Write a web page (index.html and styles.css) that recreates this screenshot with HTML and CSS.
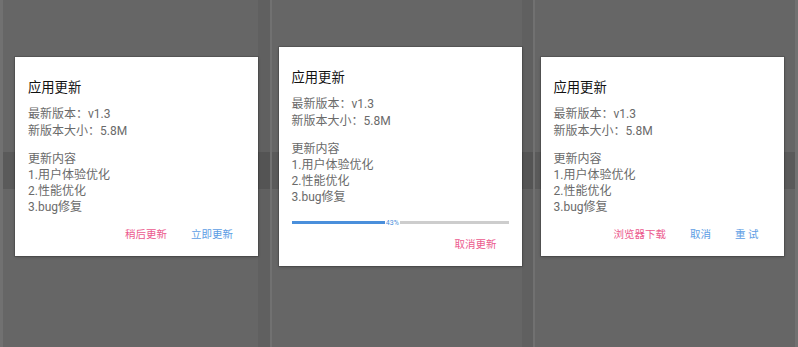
FILE: index.html
```html
<!DOCTYPE html>
<html lang="zh-CN">
<head>
    <meta charset="UTF-8">
    <meta name="viewport" content="width=device-width, initial-scale=1.0">
    <title>应用更新</title>
    <link rel="stylesheet" href="styles.css">
</head>
<body>
    <div class="stage">
        <!-- 待更新 -->
        <div class="screen screen-1">
            <div class="dialog">
                <h3 class="dialog-title">应用更新</h3>
                <div class="info">
                    <p>最新版本：v1.3</p>
                    <p>新版本大小：5.8M</p>
                </div>
                <div class="changelog">
                    <p>更新内容</p>
                    <p>1.用户体验优化</p>
                    <p>2.性能优化</p>
                    <p>3.bug修复</p>
                </div>
                <div class="actions">
                    <button class="btn btn-pink">稍后更新</button>
                    <button class="btn btn-blue">立即更新</button>
                </div>
            </div>
        </div>

        <!-- 下载中 -->
        <div class="screen screen-2">
            <div class="dialog">
                <h3 class="dialog-title">应用更新</h3>
                <div class="info">
                    <p>最新版本：v1.3</p>
                    <p>新版本大小：5.8M</p>
                </div>
                <div class="changelog">
                    <p>更新内容</p>
                    <p>1.用户体验优化</p>
                    <p>2.性能优化</p>
                    <p>3.bug修复</p>
                </div>
                <div class="progress">
                    <span class="progress-done" style="width: 43%"></span>
                    <span class="progress-text">43%</span>
                    <span class="progress-rest"></span>
                </div>
                <div class="actions">
                    <button class="btn btn-pink">取消更新</button>
                </div>
            </div>
        </div>

        <!-- 下载失败 -->
        <div class="screen screen-3">
            <div class="dialog">
                <h3 class="dialog-title">应用更新</h3>
                <div class="info">
                    <p>最新版本：v1.3</p>
                    <p>新版本大小：5.8M</p>
                </div>
                <div class="changelog">
                    <p>更新内容</p>
                    <p>1.用户体验优化</p>
                    <p>2.性能优化</p>
                    <p>3.bug修复</p>
                </div>
                <div class="actions">
                    <button class="btn btn-pink">浏览器下载</button>
                    <button class="btn btn-blue">取消</button>
                    <button class="btn btn-blue">重 试</button>
                </div>
            </div>
        </div>
    </div>
</body>
</html>
```

FILE: styles.css
```css
html, body {
    margin: 0;
    padding: 0;
}
body {
    font-family: Roboto, "Noto Sans CJK SC", sans-serif;
    width: 798px;
    height: 347px;
    overflow: hidden;
}
.stage {
    display: flex;
    height: 347px;
    padding: 0 3px;
    gap: 2px;
    background: #717171;
}
.screen {
    height: 347px;
    box-sizing: border-box;
    padding-bottom: 34px;
    display: flex;
    align-items: center;
    justify-content: center;
    background: linear-gradient(to bottom, #666 0, #666 152px, #5a5a5a 152px, #5a5a5a 189px, #666 189px);
}
.screen-1 {
    width: 267px;
    box-shadow: inset -12px 0 0 rgba(0, 0, 0, 0.06);
}
.screen-2 {
    width: 261px;
    padding-right: 5px;
    box-shadow: inset -11px 0 0 rgba(0, 0, 0, 0.06);
}
.screen-3 {
    width: 260px;
    padding-right: 6px;
}
.dialog {
    width: 243px;
    flex-shrink: 0;
    box-sizing: border-box;
    background: #fff;
    padding: 22px 13px 13px;
    box-shadow: 0 0 0 1px rgba(0, 0, 0, 0.12), 0 1px 3px rgba(0, 0, 0, 0.25);
}
.dialog-title {
    margin: 0 0 9px;
    font-size: 13.3px;
    line-height: 18px;
    font-weight: normal;
    color: #111;
}
.info p,
.changelog p {
    margin: 0;
    font-size: 12px;
    line-height: 16.2px;
    color: #6a6a6a;
}
.changelog {
    margin-top: 12px;
}
.progress {
    display: flex;
    align-items: center;
    height: 10px;
    margin-top: 12px;
}
.progress-done {
    height: 2.5px;
    background: #4a8fdb;
}
.progress-text {
    font-size: 7px;
    line-height: 10px;
    color: #4a8fdb;
    padding: 0 1px;
}
.progress-rest {
    flex: 1;
    height: 2.5px;
    background: #cdcdcd;
}
.actions {
    display: flex;
    justify-content: flex-end;
    margin-top: 11px;
}
.progress + .actions {
    margin-top: 9px;
}
.btn {
    border: none;
    background: none;
    padding: 0 12px;
    margin: 0;
    font-family: inherit;
    font-size: 10.5px;
    line-height: 16px;
    cursor: pointer;
}
.btn-pink {
    color: #ec5a8e;
}
.btn-blue {
    color: #5c9de4;
}
```
